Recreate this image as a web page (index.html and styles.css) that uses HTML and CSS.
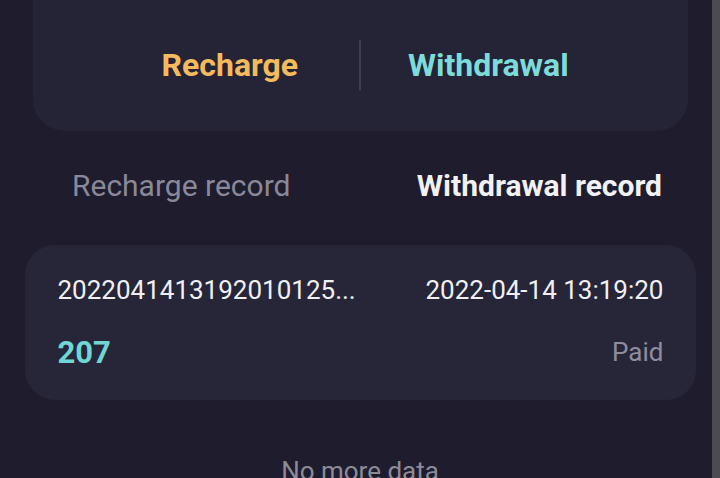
FILE: index.html
```html
<!DOCTYPE html>
<html lang="en">
<head>
<meta charset="utf-8">
<title>Withdrawal record</title>
<link rel="stylesheet" href="styles.css">
</head>
<body>
<div class="page">
  <div class="actions">
    <div class="action recharge">Recharge</div>
    <div class="divider"></div>
    <div class="action withdrawal">Withdrawal</div>
  </div>
  <div class="tabs">
    <div class="tab">Recharge record</div>
    <div class="tab active">Withdrawal record</div>
  </div>
  <div class="record">
    <div class="row">
      <span class="order">2022041413192010125...</span>
      <span class="time">2022-04-14 13:19:20</span>
    </div>
    <div class="row">
      <span class="amount">207</span>
      <span class="status">Paid</span>
    </div>
  </div>
  <div class="nomore">No more data</div>
</div>
<div class="scrollbar"></div>
</body>
</html>
```
FILE: styles.css
```css
* { box-sizing: border-box; }
html, body {
  margin: 0;
  padding: 0;
  height: 100%;
  overflow: hidden;
  background: #1e1c2d;
  font-family: Roboto, "Liberation Sans", sans-serif;
}
.page {
  width: 720px;
  display: flex;
  flex-direction: column;
  align-items: center;
}
.actions {
  width: 655px;
  height: 131px;
  margin-left: 1px;
  background: #252436;
  border-radius: 0 0 32px 32px;
  display: grid;
  grid-template-columns: 326px 2px 1fr;
  align-items: center;
  padding-bottom: 1px;
}
.action {
  font-size: 32px;
  font-weight: 700;
  line-height: 1;
}
.recharge { color: #f3ba5e; text-align: right; padding-right: 61px; }
.withdrawal { color: #7ddcda; text-align: left; padding-left: 47px; }
.divider {
  width: 2px;
  height: 50px;
  background: #3d3c50;
}
.tabs {
  width: 720px;
  height: 108px;
  display: flex;
  align-items: center;
  justify-content: space-between;
  padding: 0 58px 0 72px;
  font-size: 30px;
}
.tab { color: #8a8899; }
.tab.active { color: #f2f2f5; font-weight: 700; }
.record {
  width: 671px;
  height: 155px;
  margin-top: 6px;
  background: #262638;
  border-radius: 30px;
  padding: 30px 32px 0 33px;
  display: flex;
  flex-direction: column;
  gap: 32px;
}
.row {
  display: flex;
  justify-content: space-between;
  align-items: center;
  height: 30px;
}
.order, .time { color: #f0f0f4; font-size: 26px; }
.amount { color: #6fd6d3; font-size: 31px; font-weight: 700; }
.status { color: #8f8d9c; font-size: 26px; }
.nomore {
  margin-top: 56px;
  color: #8d8b98;
  font-size: 26px;
  line-height: 30px;
}
.scrollbar {
  position: fixed;
  top: 0;
  right: 0;
  width: 8px;
  height: 100%;
  background: #4c4b52;
}
```
